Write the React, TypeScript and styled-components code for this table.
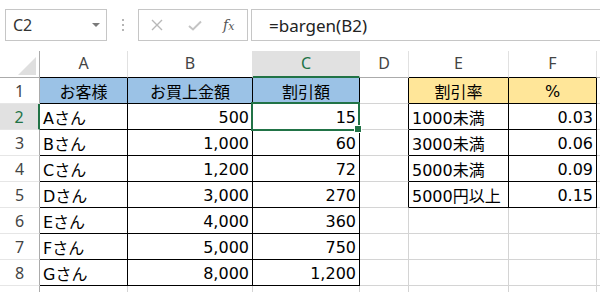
import React from 'react';
import styled, { createGlobalStyle, css } from 'styled-components';

const GREEN = '#217346';
const GRID = '#d4d4d4';
const HEAD_LINE = '#ababab';
const BLUE = '#9bc2e6';
const YELLOW = '#ffe699';

// row header + A..F, G takes what is left
const colWidths = [40, 88, 125, 107, 49, 100, 88];
const colNames = ['A', 'B', 'C', 'D', 'E', 'F', 'G'];

type CellData = { text: string; align?: 'left' | 'right' | 'center' };

const rows: (CellData | null)[][] = [
  [
    { text: 'お客様', align: 'center' },
    { text: 'お買上金額', align: 'center' },
    { text: '割引額', align: 'center' },
    null,
    { text: '割引率', align: 'center' },
    { text: '%', align: 'center' },
    null,
  ],
  [{ text: 'Aさん' }, { text: '500', align: 'right' }, { text: '15', align: 'right' }, null, { text: '1000未満' }, { text: '0.03', align: 'right' }, null],
  [{ text: 'Bさん' }, { text: '1,000', align: 'right' }, { text: '60', align: 'right' }, null, { text: '3000未満' }, { text: '0.06', align: 'right' }, null],
  [{ text: 'Cさん' }, { text: '1,200', align: 'right' }, { text: '72', align: 'right' }, null, { text: '5000未満' }, { text: '0.09', align: 'right' }, null],
  [{ text: 'Dさん' }, { text: '3,000', align: 'right' }, { text: '270', align: 'right' }, null, { text: '5000円以上' }, { text: '0.15', align: 'right' }, null],
  [{ text: 'Eさん' }, { text: '4,000', align: 'right' }, { text: '360', align: 'right' }, null, null, null, null],
  [{ text: 'Fさん' }, { text: '5,000', align: 'right' }, { text: '750', align: 'right' }, null, null, null, null],
  [{ text: 'Gさん' }, { text: '8,000', align: 'right' }, { text: '1,200', align: 'right' }, null, null, null, null],
  [null, null, null, null, null, null, null],
];

// r: 1-based sheet row, c: 0-based column (A = 0)
const inTable = (r: number, c: number) =>
  (r >= 1 && r <= 8 && c >= 0 && c <= 2) || (r >= 1 && r <= 5 && c >= 4 && c <= 5);

const fillOf = (r: number, c: number) => {
  if (r !== 1) return 'transparent';
  if (c <= 2) return BLUE;
  if (c === 4 || c === 5) return YELLOW;
  return 'transparent';
};

const GlobalStyle = createGlobalStyle`
  html, body {
    margin: 0;
    padding: 0;
    background: #ffffff;
    overflow: hidden;
  }
  * {
    box-sizing: border-box;
  }
`;

const Page = styled.div`
  width: 600px;
  height: 292px;
  overflow: hidden;
  background: #ffffff;
  font-family: 'DejaVu Sans', 'Noto Sans CJK JP', sans-serif;
`;

const FormulaBar = styled.div`
  display: flex;
  align-items: center;
  height: 51px;
  padding-left: 5px;
  padding-bottom: 1px;
  font-family: 'Noto Sans', 'Noto Sans CJK JP', sans-serif;
`;

const NameBox = styled.div`
  display: flex;
  align-items: center;
  justify-content: space-between;
  width: 102px;
  height: 32px;
  border: 1px solid #c6c6c6;
  padding: 0 6px 0 7px;
  font-size: 16px;
  color: #333333;
`;

const Caret = styled.span`
  width: 0;
  height: 0;
  border-left: 4px solid transparent;
  border-right: 4px solid transparent;
  border-top: 4px solid #7a7a7a;
`;

const Dots = styled.div`
  width: 31px;
  display: flex;
  flex-direction: column;
  align-items: center;
  gap: 3px;
  & > span {
    width: 2px;
    height: 2px;
    background: #b5b5b5;
  }
`;

const FxBox = styled.div`
  display: flex;
  align-items: center;
  width: 110px;
  height: 32px;
  border: 1px solid #c6c6c6;
  padding-left: 12px;
`;

const IconSlot = styled.span<{ $gap: number }>`
  display: flex;
  margin-left: ${(p) => p.$gap}px;
`;

const FxText = styled.span`
  margin-left: 21px;
  font-family: 'DejaVu Serif', 'Liberation Serif', serif;
  font-style: italic;
  font-size: 14px;
  color: #555555;
  & > span {
    font-size: 11px;
  }
`;

const FormulaInput = styled.div`
  flex: 1;
  height: 32px;
  margin-left: 3px;
  margin-right: -10px;
  border: 1px solid #c6c6c6;
  display: flex;
  align-items: center;
  padding-left: 17px;
  font-size: 17px;
  color: #222222;
`;

const Sheet = styled.div`
  display: grid;
  grid-template-columns: ${colWidths.map((w) => `${w}px`).join(' ')} 1fr;
  grid-template-rows: 27px repeat(9, 26px);
`;

const Corner = styled.div`
  position: relative;
  border-right: 1px solid ${HEAD_LINE};
  border-bottom: 1px solid ${HEAD_LINE};
  &::after {
    content: '';
    position: absolute;
    right: 3px;
    bottom: 2px;
    width: 0;
    height: 0;
    border-left: 18px solid transparent;
    border-bottom: 18px solid #dfdfdf;
  }
`;

const ColHead = styled.div<{ $active?: boolean; $bottom: string }>`
  display: flex;
  align-items: center;
  justify-content: center;
  padding-bottom: 3px;
  font-family: 'Noto Sans', sans-serif;
  font-size: 16px;
  color: #444444;
  border-right: 1px solid #e1e1e1;
  border-bottom: 1px solid ${(p) => p.$bottom};
  ${(p) =>
    p.$active &&
    css`
      background: #e1e1e1;
      color: ${GREEN};
      border-bottom: 2px solid ${GREEN};
      padding-bottom: 2px;
    `}
`;

const RowHead = styled.div<{ $active?: boolean }>`
  display: flex;
  align-items: center;
  justify-content: center;
  font-family: 'Noto Sans', sans-serif;
  font-size: 16px;
  color: #444444;
  border-right: 1px solid ${HEAD_LINE};
  border-bottom: 1px solid #e6e6e6;
  ${(p) =>
    p.$active &&
    css`
      background: #e1e1e1;
      color: ${GREEN};
      border-right: 2px solid ${GREEN};
    `}
`;

const Cell = styled.div<{
  $bg: string;
  $align: 'left' | 'right' | 'center';
  $right: string;
  $bottom: string;
  $selected?: boolean;
}>`
  position: relative;
  display: flex;
  align-items: center;
  justify-content: ${(p) =>
    p.$align === 'right' ? 'flex-end' : p.$align === 'center' ? 'center' : 'flex-start'};
  padding: 1px 3px 0 3px;
  font-size: 16px;
  color: #000000;
  white-space: nowrap;
  background: ${(p) => p.$bg};
  border-right: 1px solid ${(p) => p.$right};
  border-bottom: 1px solid ${(p) => p.$bottom};
  ${(p) =>
    p.$selected &&
    css`
      &::after {
        content: '';
        position: absolute;
        top: -2px;
        left: -2px;
        right: -1px;
        bottom: -2px;
        border: 2px solid ${GREEN};
        z-index: 2;
      }
      &::before {
        content: '';
        position: absolute;
        right: -3px;
        bottom: -4px;
        width: 6px;
        height: 6px;
        background: ${GREEN};
        border: 1px solid #ffffff;
        z-index: 3;
      }
    `}
`;

const XIcon = () => (
  <svg width="12" height="12" viewBox="0 0 12 12">
    <path d="M1 1 L11 11 M11 1 L1 11" stroke="#b8b8b8" strokeWidth="1.4" fill="none" />
  </svg>
);

const CheckIcon = () => (
  <svg width="14" height="11" viewBox="0 0 14 11">
    <path d="M1 6 L5 9.5 L13 1.5" stroke="#c4c4c4" strokeWidth="2" fill="none" />
  </svg>
);

const App = () => {
  return (
    <Page>
      <GlobalStyle />
      <FormulaBar>
        <NameBox>
          C2
          <Caret />
        </NameBox>
        <Dots>
          <span />
          <span />
          <span />
        </Dots>
        <FxBox>
          <IconSlot $gap={0}>
            <XIcon />
          </IconSlot>
          <IconSlot $gap={25}>
            <CheckIcon />
          </IconSlot>
          <FxText>
            f<span>x</span>
          </FxText>
        </FxBox>
        <FormulaInput>=bargen(B2)</FormulaInput>
      </FormulaBar>

      <Sheet>
        <Corner />
        {colNames.map((name, c) => (
          <ColHead key={name} $active={name === 'C'} $bottom={inTable(1, c) ? '#000000' : HEAD_LINE}>
            {name === 'G' ? '' : name}
          </ColHead>
        ))}

        {rows.map((row, i) => {
          const r = i + 1;
          return (
            <React.Fragment key={r}>
              <RowHead $active={r === 2}>{r}</RowHead>
              {row.map((cell, c) => {
                const right = inTable(r, c) || inTable(r, c + 1) ? '#000000' : GRID;
                const bottom = inTable(r, c) || inTable(r + 1, c) ? '#000000' : GRID;
                return (
                  <Cell
                    key={c}
                    $bg={fillOf(r, c)}
                    $align={cell?.align ?? 'left'}
                    $right={right}
                    $bottom={bottom}
                    $selected={r === 2 && c === 2}
                  >
                    {cell?.text}
                  </Cell>
                );
              })}
            </React.Fragment>
          );
        })}
      </Sheet>
    </Page>
  );
};

export default App;
